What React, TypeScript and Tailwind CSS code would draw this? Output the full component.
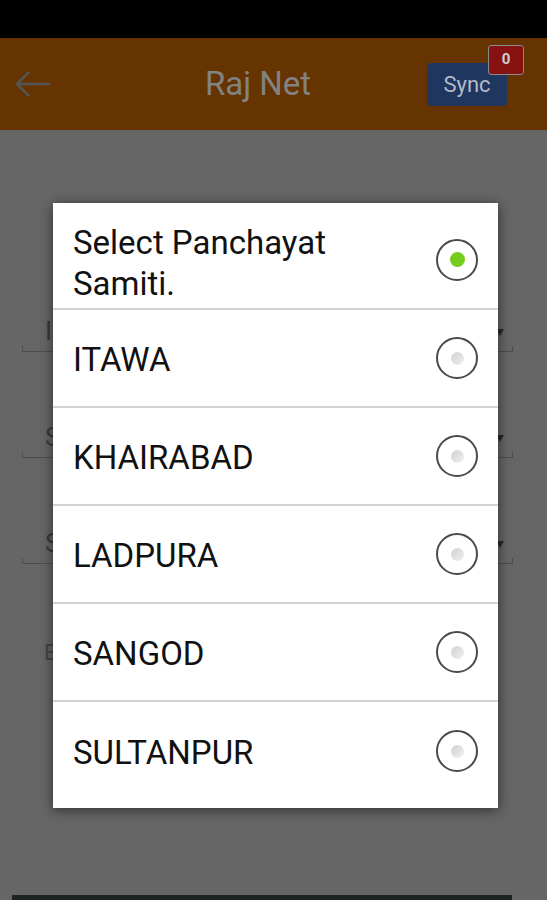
import React from "react";

const OPTIONS = ["ITAWA", "KHAIRABAD", "LADPURA", "SANGOD", "SULTANPUR"];

function Radio({ checked }: { checked?: boolean }) {
  return (
    <span className="flex h-[42px] w-[42px] shrink-0 items-center justify-center rounded-full border-2 border-[#4a4a4a] bg-white">
      {checked ? (
        <span className="h-[15px] w-[15px] rounded-full bg-[#74cc1e]" />
      ) : (
        <span className="h-[13px] w-[13px] rounded-full bg-gradient-to-br from-[#cfcfcf] to-[#f2f2f2]" />
      )}
    </span>
  );
}

function Spinner({ letter }: { letter: string }) {
  return (
    <div className="relative ml-[22px] mr-[34px] h-[106px]">
      <span className="absolute left-[23px] top-[12px] text-[26px] text-[#3a3a3a]">{letter}</span>
      <span className="absolute right-[9px] top-[29px] h-0 w-0 border-x-[4px] border-t-[7px] border-x-transparent border-t-[#2a2a2a]" />
      <div className="absolute left-0 right-0 top-[46px] h-[6px] border-x border-b border-[#4e4e4e]" />
    </div>
  );
}

export default function App() {
  return (
    <div className="relative h-[900px] w-[547px] overflow-hidden bg-[#666666] font-['Roboto',sans-serif]">
      <div className="h-[38px] bg-black" />

      {/* toolbar */}
      <div className="flex h-[92px] items-center bg-[#663400] px-[14px]">
        <svg width="38" height="30" viewBox="0 0 38 30" className="shrink-0">
          <path d="M36 15H3M15 3L3 15l12 12" fill="none" stroke="#545454" strokeWidth="2.5" />
        </svg>
        <div className="flex-1 pl-[37px] text-center text-[33px] text-[#828282]">Raj Net</div>
        <div className="relative mr-[26px]">
          <div className="flex h-[43px] w-[80px] items-center justify-center rounded-[4px] bg-[#1f3661] text-[22px] text-[#b3bac5]">
            Sync
          </div>
          <div className="absolute -right-[17px] -top-[18px] flex h-[30px] w-[36px] items-start justify-center rounded-[3px] border border-[#8a8a8a] bg-[#861212] pt-[2px] text-[15px] font-bold text-[#cfcfcf]">
            0
          </div>
        </div>
      </div>

      {/* background form */}
      <div className="pt-[170px]">
        <Spinner letter="I" />
        <Spinner letter="S" />
        <Spinner letter="S" />
        <div className="ml-[44px] mt-[18px] text-[22px] text-[#444]">E</div>
      </div>

      <div className="absolute bottom-0 left-[12px] right-[35px] h-[5px] bg-[#1b2624]" />

      {/* dialog */}
      <div className="absolute left-[53px] top-[203px] w-[445px] bg-white shadow-[0_2px_12px_rgba(0,0,0,0.55)]">
        <div className="flex h-[107px] items-center justify-between border-b-2 border-[#d2d2d2] pl-[20px] pr-[20px] pt-[8px]">
          <div className="mt-[6px] text-[33px] leading-[41px] text-[#111]">
            Select Panchayat
            <br />
            Samiti.
          </div>
          <Radio checked />
        </div>
        {OPTIONS.map((o, i) => (
          <div
            key={o}
            className={
              i < OPTIONS.length - 1
                ? "flex h-[98px] items-center justify-between border-b-2 border-[#d2d2d2] pl-[20px] pr-[20px]"
                : "flex h-[98px] items-center justify-between pl-[20px] pr-[20px]"
            }
          >
            <span className="mt-[4px] text-[33px] text-[#111]">{o}</span>
            <Radio />
          </div>
        ))}
        <div className="h-[8px]" />
      </div>
    </div>
  );
}
